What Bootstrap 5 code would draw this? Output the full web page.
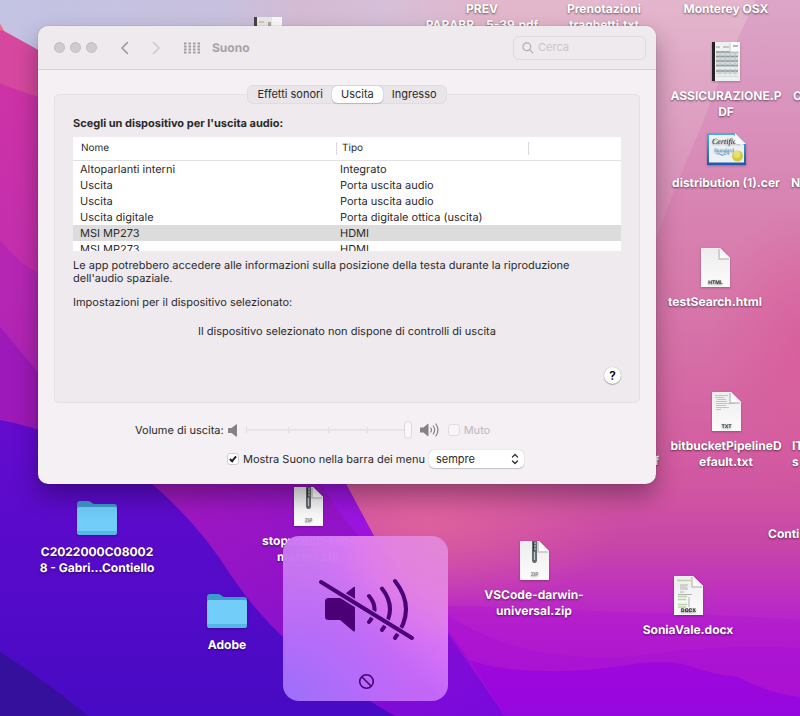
<!DOCTYPE html>
<html lang="it">
<head>
<meta charset="utf-8">
<meta name="viewport" content="width=device-width, initial-scale=1">
<title>Suono</title>
<link rel="stylesheet" href="https://cdn.jsdelivr.net/npm/bootstrap@5.3.0/dist/css/bootstrap.min.css">
<style>
body{font-family:Inter,"Noto Sans",sans-serif;font-size:11px;line-height:13px;color:#2b292b;text-rendering:geometricPrecision}
.desktop{min-height:100vh;background:#c33fac}
.wallpaper{position:absolute;inset:0;width:100%;height:100%}
/* desktop items */
.desk-item{position:absolute;width:120px;color:#fff;font-size:12px;line-height:16px;font-weight:700;text-shadow:0 1px 2px rgba(0,0,0,.55)}
.desk-item .pic{height:39px;margin-bottom:7px;filter:drop-shadow(0 1px 1px rgba(0,0,0,.25))}
.at-prev{left:422px;top:1px}
.at-pren{left:544px;top:1px}
.at-mont{left:666px;top:1px}
.at-peek{left:208px;top:17px}
.at-assi{left:666px;top:42px}
.at-cert{left:666px;top:129px}
.at-test{left:655px;top:248px}
.at-bitb{left:666px;top:392px}
.at-proj{left:37px;top:498px}
.at-adob{left:167px;top:591px}
.at-stop{left:248px;top:487px}
.at-vsco{left:474px;top:541px}
.at-soni{left:628px;top:576px}
.at-edge1{left:793px;top:88px}
.at-edge2{left:791px;top:175px}
.at-edge3{left:792px;top:438px}
.at-edge4{left:768px;top:526px}
.at-tail{left:539px;top:453px}
/* window */
.pane{position:absolute;left:38px;right:144px;top:26px;background:#f4f0f4;border-radius:10px;box-shadow:0 0 1px rgba(0,0,0,.5),0 12px 24px rgba(0,0,0,.33)}
.titlebar{height:44px;padding:0 10px 0 16px;background:#eeeaee;border-bottom:1px solid #d3ced3;border-radius:10px 10px 0 0}
.lights{gap:5px}
.light{width:11px;height:11px;border-radius:50%;background:#d0cbd0;border:1px solid #bfbabf;padding:0}
.nav-b{border:0;background:none;padding:0;line-height:0;margin-left:23px}
.title{font-size:12px;font-weight:700;color:#a8a3a8;margin-left:12px}
.search{width:133px;height:24px;border:1px solid #dfdadf;border-radius:6px;padding:0 12px 0 8px}
.search input{border:0;background:none;outline:0;padding:0;width:90px;font-size:11px;color:#2b292b}
.search input::placeholder{color:#cbc6cb;opacity:1}
.content{padding:15px 16px 0}
.segs{position:relative;background:#e9e5e9;border:1px solid #e0dce0;border-radius:6px;height:19px}
.segs button{border:0;background:none;padding:0 9px;height:17px;line-height:17px;border-radius:5px;color:#2b292b}
.segs button.on{background:#fff;box-shadow:0 0 1px rgba(0,0,0,.4),0 1px 1px rgba(0,0,0,.15)}
.groupbox{margin-top:-10px;background:#eeeaee;border:1px solid #e4e0e4;border-radius:5px;padding:21px 18px 18px;min-height:309px}
.groupbox h1{font-size:11px;line-height:14px;font-weight:700;margin:0 0 7px}
.list{height:114px;overflow:hidden;background:#fff}
.list table{width:100%;table-layout:fixed;border-collapse:collapse}
.list th{height:23px;padding:0 8px;font-size:10px;line-height:13px;font-weight:400;border-bottom:1px solid #e3e0e3;background:linear-gradient(#dcd9dc,#dcd9dc) right 5px/1px 13px no-repeat}
.list th:nth-child(2){padding-left:5px}
.list th:last-child{background:none}
.list td{height:16px;line-height:16px;padding:0 7px;white-space:nowrap}
.list td:nth-child(2){padding-left:3px}
.list .sel{background:#dcdcdc}
.c-name{width:264px}.c-kind{width:192px}
.help{width:17px;height:17px;border:0;border-radius:50%;background:#fff;padding:0;font-size:12px;line-height:17px;font-weight:600;box-shadow:0 0 1px rgba(0,0,0,.35),0 1px 1px rgba(0,0,0,.25)}
.note{margin:8px 0 11px}
.vol{appearance:none;width:166px;height:18px;margin:0;background:
 linear-gradient(#e7e3e7,#e7e3e7) 0 8px/100% 2px no-repeat,
 linear-gradient(#dfdbdf,#dfdbdf) 0 6px/1px 6px no-repeat,
 linear-gradient(#dfdbdf,#dfdbdf) 42px 6px/1px 6px no-repeat,
 linear-gradient(#dfdbdf,#dfdbdf) 82px 6px/1px 6px no-repeat,
 linear-gradient(#dfdbdf,#dfdbdf) 121px 6px/1px 6px no-repeat}
.vol::-webkit-slider-thumb{appearance:none;width:8px;height:18px;border-radius:4px;background:#f9f7f9;border:1px solid #dcd8dc}
.tick{appearance:none;width:12px;height:12px;margin:0;border:1px solid #d3cfd3;border-radius:3px;background:#fff;display:grid;place-items:center}
.tick:checked::after{content:"";width:4px;height:7px;border:solid #222;border-width:0 2px 2px 0;transform:rotate(40deg);margin-top:-2px}
.tick:disabled{border-color:#e0dce0;background:#f8f5f8}
.muted{color:#bcb8bc}
.pop{position:relative}
.pop select{appearance:none;width:95px;height:18px;border:0;border-radius:5px;background:#fff;padding:0 7px;font-size:11px;line-height:18px;color:#2b292b;box-shadow:0 0 1px rgba(0,0,0,.3),0 1px 1px rgba(0,0,0,.18)}
.pop svg{position:absolute;right:5px;top:3px;pointer-events:none}
.controls{padding:18px 0 16px;gap:11px}
.vrow{padding-left:81px;gap:8px}
.vlabel{gap:4px}
.brow{padding-left:173px}
.brow .pop{margin-left:4px}
/* volume overlay */
.osd{position:absolute;left:283px;top:536px;width:165px;height:165px;border-radius:16px;opacity:.98;
 background:radial-gradient(circle at 0 100%,#9c74ff 0,rgba(166,112,252,.8) 18%,rgba(190,108,250,0) 55%),radial-gradient(circle at 100% 0,#e487d8 0,#e484e0 22%,rgba(228,120,248,0) 48%),linear-gradient(to bottom left,#e27bf2 0,#e07af7 26%,rgba(215,115,247,0) 52%),linear-gradient(#c87bf0 0,#cb6df6 60%,#c468fa 100%)}
</style>
<script src="https://cdn.jsdelivr.net/npm/bootstrap@5.3.0/dist/js/bootstrap.bundle.min.js"></script>
</head>
<body>
<main class="desktop position-relative overflow-hidden">
<svg class="wallpaper" viewBox="0 0 800 716" preserveAspectRatio="none" aria-hidden="true">
 <defs>
  <linearGradient id="gr" x1="0" y1="0" x2="0" y2="1"><stop offset="0" stop-color="#dca6c8"/><stop offset=".25" stop-color="#d887b5"/><stop offset=".42" stop-color="#d777aa"/><stop offset=".62" stop-color="#d35fa1"/><stop offset=".7" stop-color="#cf52a2"/><stop offset=".76" stop-color="#c746a8"/><stop offset=".82" stop-color="#bf33bc"/><stop offset=".88" stop-color="#b51fce"/><stop offset="1" stop-color="#a80cd6"/></linearGradient>
  <linearGradient id="gt" x1="0" y1="0" x2="1" y2="0"><stop offset="0" stop-color="#c3c3e3"/><stop offset=".38" stop-color="#c8c0de"/><stop offset=".5" stop-color="#d4bbd3"/><stop offset=".65" stop-color="#d6bfd8"/><stop offset=".8" stop-color="#e2b6cb"/></linearGradient>
  <linearGradient id="gl" x1="0" y1="0" x2="0" y2="1"><stop offset="0" stop-color="#cd33a6"/><stop offset=".55" stop-color="#c12db0"/><stop offset="1" stop-color="#a71cba"/></linearGradient>
  <linearGradient id="gb" x1="0" y1="0" x2="0" y2="1"><stop offset="0" stop-color="#640bce"/><stop offset="1" stop-color="#480ac4"/></linearGradient>
  <linearGradient id="gm" x1="0" y1="0" x2="1" y2="1"><stop offset="0" stop-color="#a81cb8"/><stop offset="1" stop-color="#7808dc"/></linearGradient>
  <linearGradient id="gw" x1="0" y1="0" x2="0" y2="1"><stop offset="0" stop-color="#9e08da"/><stop offset="1" stop-color="#9606e0"/></linearGradient>
  <linearGradient id="gp" x1="0" y1="0" x2="0" y2="1"><stop offset="0" stop-color="#e5b9ce"/><stop offset="1" stop-color="#d88ab6"/></linearGradient>
  <radialGradient id="gk"><stop offset="0" stop-color="#e2669c" stop-opacity=".8"/><stop offset="1" stop-color="#e2669c" stop-opacity="0"/></radialGradient>
  <radialGradient id="gh"><stop offset="0" stop-color="#da5596" stop-opacity=".65"/><stop offset="1" stop-color="#da5596" stop-opacity="0"/></radialGradient>
 </defs>
 <rect width="800" height="716" fill="url(#gr)"/>
 <ellipse cx="430" cy="520" rx="190" ry="90" fill="url(#gk)"/>
 <ellipse cx="810" cy="350" rx="100" ry="150" fill="url(#gh)"/>
 <path d="M0 0H600L440 300H0Z" fill="url(#gt)"/>
 <path d="M573 0H756Q724 65 700 130Q675 185 656 240H480Q500 80 573 0Z" fill="url(#gp)" opacity=".85"/>
 <path d="M0 24L4 31L60 62V484H0Z" fill="#d6489f"/>
 <path d="M0 24L4 31L0 30Z" fill="#ec7282"/>
 <path d="M0 83Q20 92 60 103V484H0Z" fill="url(#gl)"/>
 <path d="M0 240Q20 268 60 284V484H0Z" fill="#ac22b6" opacity=".6"/>
 <path d="M0 327Q20 350 60 400V484H0Z" fill="#9a18ba" opacity=".85"/>
 <path d="M100 440H330L346 484L376 540L448 630L510 716H200Z" fill="url(#gm)"/>
 <path d="M300 440L321 484Q350 536 448 630V640L376 540L346 484L330 440Z" fill="#9a14dd"/>
 <path d="M448 606Q530 608 620 612Q720 614 800 620V716H505L448 634Z" fill="#b016d0" opacity=".4"/>
 <path d="M448 615Q480 638 530 650Q600 665 680 650Q740 645 800 648V716H505L448 634Z" fill="#a80fd4" opacity=".5"/>
 <path d="M470 660Q500 672 560 671Q600 670 640 663Q670 660 690 666Q710 674 738 677Q770 694 800 697V716H505Z" fill="url(#gw)"/>
 <path d="M0 420Q60 430 152 484Q200 525 232 577Q256 612 283 637Q340 685 395 716H0Z" fill="url(#gb)"/>
 <path d="M0 652Q45 680 88 716H0Z" fill="#35109c"/>
</svg>

<svg width="0" height="0" class="position-absolute" aria-hidden="true">
 <defs>
  <linearGradient id="paper" x1="0" y1="0" x2="0" y2="1"><stop offset="0" stop-color="#ededed"/><stop offset="1" stop-color="#fcfcfc"/></linearGradient>
  <linearGradient id="curl" x1="0" y1="1" x2="1" y2="0"><stop offset="0" stop-color="#fff"/><stop offset=".5" stop-color="#f4f4f4"/><stop offset="1" stop-color="#c4c4c4"/></linearGradient>
  <linearGradient id="blue" x1="0" y1="0" x2="0" y2="1"><stop offset="0" stop-color="#45b2e0"/><stop offset="1" stop-color="#1e58ae"/></linearGradient>
  <symbol id="sheet" viewBox="0 0 29 39"><path d="M0 0H19L29 10V39H0Z" fill="url(#paper)"/><path d="M18 1V11H28" fill="none" stroke="#aaa" stroke-width="1.500" opacity=".6"/><path d="M19 0L29 10H20.500Q19 10 19 8.500Z" fill="url(#curl)"/></symbol>
  <symbol id="zip" viewBox="0 0 29 39"><use href="#sheet" width="29" height="39"/><path d="M12 0H17V19Q17 22 14.500 22Q12 22 12 19Z" fill="#62686c"/><path d="M13 2H16M13 5H16M13 8H16M14.500 11V19" stroke="#c4c8ca" stroke-width="1.200"/><path d="M13.500 1V10" stroke="#34393c"/></symbol>
  <symbol id="folder" viewBox="0 0 40 34"><path d="M0 3Q0 0 3 0H11Q13 0 14.500 1.500Q16 3 18 3H37Q40 3 40 6V18H0Z" fill="#3d9bcb"/><path d="M0 8Q0 6 2 6H38Q40 6 40 8V31Q40 34 37 34H3Q0 34 0 31Z" fill="#72cdf8"/><path d="M0 30H40V31Q40 34 37 34H3Q0 34 0 31Z" fill="#55b7e6"/></symbol>
 </defs>
</svg>

<div class="desk-item at-prev text-center">PREV<br>PARABR...5-39.pdf</div>
<div class="desk-item at-pren text-center">Prenotazioni<br>traghetti.txt</div>
<div class="desk-item at-mont text-center">Monterey OSX</div>
<div class="desk-item at-peek text-center"><svg width="28" height="39" viewBox="0 0 28 39"><path d="M0 0H28V39H0Z" fill="#e9e9e6"/><path d="M0 0H3V39H0Z" fill="#444"/><path d="M5 5H10" stroke="#d8a070"/><path d="M14 5H17V9H14Z" fill="#aaa"/><path d="M18 0H28V9H18Z" fill="#fafafa"/></svg></div>

<div class="desk-item at-assi text-center"><div class="pic d-flex justify-content-center align-items-center"><svg width="28" height="39" viewBox="0 0 28 39"><path d="M0 0H28V39H0Z" fill="#eff1f1"/><path d="M0 0H3V39H0Z" fill="#222"/><path d="M4 5H8M11 5H17" stroke="#999"/><path d="M4 9H26V35H4Z" fill="#d5dadb"/><path d="M4 10H26M4 14.500H26M4 19H26M4 23.500H26M4 29H26" stroke="#8f989b" stroke-width="1.500"/><path d="M8 9V34M13 9V34M18 9V34M23 9V34" stroke="#b9c1c4"/><path d="M4 26H26M4 33H26" stroke="#fff" stroke-width="1.200"/><path d="M18 0H28V10H18Z" fill="#fafafa"/><path d="M18 1V10H27" fill="none" stroke="#c9c9c9"/><path d="M21 4H26" stroke="#777"/></svg></div>ASSICURAZIONE.P<br>DF</div>
<div class="desk-item at-cert text-center"><div class="pic d-flex justify-content-center align-items-center"><svg width="39" height="32" viewBox="0 0 39 32"><path d="M0 0H28L39 11V32H0Z" fill="url(#blue)"/><path d="M2 2H27L37 12V29.500H2Z" fill="#edf1f3"/><text x="5" y="11" font-family="Liberation Serif,serif" font-style="italic" font-weight="400" font-size="8" fill="#333">Certifica</text><path d="M28 0L39 11H30Q28 11 28 9Z" fill="#fafafa"/><text x="7" y="19" font-family="Liberation Serif,serif" font-style="italic" font-weight="400" font-size="5.500" fill="#459bd4">Standard</text><path d="M9 21Q12 20 14 22T18 20T22 22M11 20Q15 24 22 20" fill="none" stroke="#66aada" stroke-width=".8"/><circle cx="30.500" cy="23" r="5.500" fill="#d2cb39"/><circle cx="30" cy="21.500" r="3.500" fill="#e6e071"/></svg></div>distribution (1).cer</div>
<div class="desk-item at-test text-center"><div class="pic d-flex justify-content-center"><svg width="29" height="39"><use href="#sheet"/><text x="14.500" y="36" text-anchor="middle" font-size="5" font-weight="700" fill="#444">HTML</text></svg></div>testSearch.html</div>
<div class="desk-item at-bitb text-center"><div class="pic d-flex justify-content-center"><svg width="29" height="39"><use href="#sheet"/><path d="M3 3.500H16M3 5.500H12M5 7.500H14M4 9.500H15M4 11.500H23M4 13.500H14M4 15.500H17M4 17.500H9" stroke="#b5b5b5" stroke-width=".8"/><text x="14.500" y="36" text-anchor="middle" font-size="5" font-weight="700" fill="#444">TXT</text></svg></div>bitbucketPipelineD<br>efault.txt</div>
<div class="desk-item at-proj text-center"><div class="pic d-flex justify-content-center align-items-center"><svg width="40" height="34"><use href="#folder"/></svg></div>C2022000C08002<br>8 - Gabri...Contiello</div>
<div class="desk-item at-adob text-center"><div class="pic d-flex justify-content-center align-items-center"><svg width="40" height="34"><use href="#folder"/></svg></div>Adobe</div>
<div class="desk-item at-stop text-center"><div class="pic d-flex justify-content-center"><svg width="29" height="39"><use href="#zip"/><text x="14.500" y="35" text-anchor="middle" font-size="5" font-weight="400" fill="#777">ZIP</text></svg></div>stopwatch-tab-<br>master.zip</div>
<div class="desk-item at-vsco text-center"><div class="pic d-flex justify-content-center"><svg width="29" height="39"><use href="#zip"/><text x="14.500" y="35" text-anchor="middle" font-size="5" font-weight="400" fill="#777">ZIP</text></svg></div>VSCode-darwin-<br>universal.zip</div>
<div class="desk-item at-soni text-center"><div class="pic d-flex justify-content-center"><svg width="29" height="39"><use href="#sheet"/><path d="M3 4.500H17M4 20.500H13M4 23.500H12M4 28.500H13M4 31H12" stroke="#b9d3a4" stroke-width="1.300"/><path d="M6 9H14M6 11H13M6 13H14M6 16H10M4 18.500H18M15 21V31" stroke="#aaa" stroke-width=".9"/><text x="14.500" y="36" text-anchor="middle" font-size="5" font-weight="800" fill="#333">DOCX</text></svg></div>SoniaVale.docx</div>
<div class="desk-item at-edge1">C</div>
<div class="desk-item at-edge2">N</div>
<div class="desk-item at-edge3">IT<br>s</div>
<div class="desk-item at-edge4">Conti</div>
<div class="desk-item at-tail text-end">.pdf</div>

<section class="pane" aria-label="Suono">
 <header class="titlebar d-flex align-items-center">
  <div class="lights d-flex">
   <button class="light" type="button" aria-label="Chiudi"></button>
   <button class="light" type="button" aria-label="Riduci"></button>
   <button class="light" type="button" aria-label="Ingrandisci"></button>
  </div>
  <button class="nav-b" type="button" aria-label="Indietro"><svg width="9" height="14" viewBox="0 0 9 14"><path d="M7.500 1.500L2 7L7.500 12.500" fill="none" stroke="#989398" stroke-width="1.500" stroke-linecap="round"/></svg></button>
  <button class="nav-b" type="button" aria-label="Avanti" disabled><svg width="9" height="14" viewBox="0 0 9 14"><path d="M1.500 1.500L7 7L1.500 12.500" fill="none" stroke="#cdc8cd" stroke-width="1.500" stroke-linecap="round"/></svg></button>
  <button class="nav-b" type="button" aria-label="Mostra tutte"><svg width="16" height="12" viewBox="0 0 16 12"><path d="M0 1.500H16M0 4.500H16M0 7.500H16M0 10.500H16" stroke="#a39ea3" stroke-width="2" stroke-dasharray="2.500 2"/></svg></button>
  <span class="title">Suono</span>
  <label class="search ms-auto d-flex align-items-center gap-1"><svg width="12" height="12" viewBox="0 0 12 12" fill="none" stroke="#b3aeb3" stroke-width="1.200"><circle cx="4.800" cy="4.800" r="3.900"/><path d="M7.700 7.700L11.300 11.300"/></svg><input type="text" placeholder="Cerca" aria-label="Cerca"></label>
 </header>

 <div class="content">
  <div class="d-flex justify-content-center"><div class="segs d-flex" role="tablist">
   <button type="button" role="tab">Effetti sonori</button>
   <button type="button" role="tab" class="on" aria-selected="true">Uscita</button>
   <button type="button" role="tab">Ingresso</button>
  </div></div>
  <div class="groupbox d-flex flex-column">
   <h1>Scegli un dispositivo per l'uscita audio:</h1>
   <div class="list flex-shrink-0"><table>
    <colgroup><col class="c-name"><col class="c-kind"><col></colgroup>
    <thead><tr><th>Nome</th><th>Tipo</th><th></th></tr></thead>
    <tbody>
     <tr><td>Altoparlanti interni</td><td>Integrato</td><td></td></tr>
     <tr><td>Uscita</td><td>Porta uscita audio</td><td></td></tr>
     <tr><td>Uscita</td><td>Porta uscita audio</td><td></td></tr>
     <tr><td>Uscita digitale</td><td>Porta digitale ottica (uscita)</td><td></td></tr>
     <tr class="sel"><td>MSI MP273</td><td>HDMI</td><td></td></tr>
     <tr><td>MSI MP273</td><td>HDMI</td><td></td></tr>
    </tbody>
   </table></div>
   <p class="note">Le app potrebbero accedere alle informazioni sulla posizione della testa durante la riproduzione<br>dell'audio spaziale.</p>
   <p class="mb-3">Impostazioni per il dispositivo selezionato:</p>
   <p class="text-center mb-0">Il dispositivo selezionato non dispone di controlli di uscita</p>
   <button class="help mt-auto ms-auto" type="button" aria-label="Aiuto">?</button>
  </div>
  <div class="controls d-flex flex-column">
   <div class="vrow d-flex align-items-center">
    <div class="vlabel d-flex align-items-center"><label for="vol">Volume di uscita:</label>
    <svg width="10" height="13" viewBox="0 0 10 13"><path d="M0 4.500Q0 4 .5 4H3.500L8 .5Q9 0 9 1V12Q9 13 8 12.500L3.500 9H.5Q0 9 0 8.500Z" fill="#858185"/></svg></div>
    <input class="vol" id="vol" type="range" min="0" max="100" value="100" disabled>
    <svg width="20" height="14" viewBox="0 0 20 14"><path d="M0 5Q0 4.500 .5 4.500H3.500L7.500 1Q8.500 .3 8.500 1.500V12.500Q8.500 13.500 7.500 13L3.500 9.500H.5Q0 9.500 0 9Z" fill="#858185"/><path d="M10.800 5Q12.200 7 10.800 9M13.300 3Q16 7 13.300 11M15.900 1Q20 7 15.900 13" fill="none" stroke="#858185" stroke-width="1.200" stroke-linecap="round"/></svg>
    <div class="d-flex align-items-center"><input class="tick" id="mute" type="checkbox" disabled><label class="muted ms-1" for="mute">Muto</label></div>
   </div>
   <div class="brow d-flex align-items-center">
    <input class="tick" id="bar" type="checkbox" checked><label class="ms-1" for="bar">Mostra Suono nella barra dei menu</label>
    <div class="pop"><select aria-label="Mostra"><option>sempre</option></select><svg width="8" height="12" viewBox="0 0 8 12"><path d="M1.500 4L4 1.500L6.500 4M1.500 8L4 10.500L6.500 8" fill="none" stroke="#333" stroke-width="1.300" stroke-linecap="round"/></svg></div>
   </div>
  </div>
 </div>
</section>

<div class="osd" role="img" aria-label="Audio disattivato">
 <svg viewBox="0 0 165 165" width="100%" height="100%">
  <defs><mask id="cut"><rect width="165" height="165" fill="#fff"/><path d="M30 41L136 107" stroke="#000" stroke-width="7"/></mask></defs>
  <g fill="#4b0075" mask="url(#cut)"><path d="M42 65.500Q42 62 45.500 62H57L70 51.500Q72 50 72 52V94Q72 96.500 70 95L57 84H45.500Q42 84 42 80.500Z"/>
  <g fill="none" stroke="#4b0075" stroke-width="4" stroke-linecap="round"><path d="M86 60Q97 73 86 86M99 52.500Q115 73 99 94M112 45Q134 73 112 102"/></g></g>
  <g fill="none" stroke="#4b0075"><path d="M38 46L129 102" stroke-width="4" stroke-linecap="round"/><circle cx="83.500" cy="145.500" r="6.800" stroke-width="1.600"/><path d="M78.700 140.700L88.300 150.300" stroke-width="1.600"/></g>
 </svg>
</div>
</main>
</body>
</html>
